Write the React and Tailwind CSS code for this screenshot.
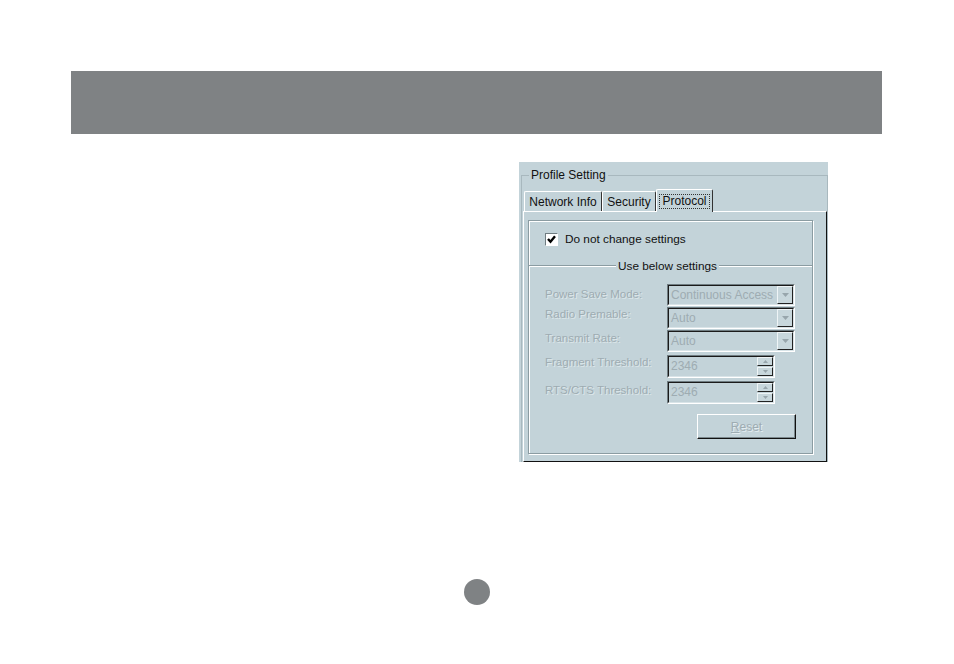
const FONT = { fontFamily: '"Liberation Sans", Arial, sans-serif' };

function Arrow() {
  return (
    <svg width="7" height="4" viewBox="0 0 7 4">
      <path d="M0 0h7L3.5 4z" fill="#98a6ac" />
    </svg>
  );
}

function Combo({ value }) {
  return (
    <div className="flex h-[22px] w-[128px] border border-t-[#6f7c81] border-l-[#6f7c81] border-r-white border-b-white">
      <div className="flex flex-1 border border-t-[#1a1a1a] border-l-[#1a1a1a] border-r-[#d9e4e8] border-b-[#d9e4e8]">
        <div className="flex-1 pl-[2px] text-[12px] leading-[18px] text-[#9eacb2]">{value}</div>
        <div className="flex w-[16px] items-center justify-center border border-t-[#eef4f6] border-l-[#eef4f6] border-r-[#222] border-b-[#222] bg-[#c8d7dc]">
          <Arrow />
        </div>
      </div>
    </div>
  );
}

function SpinBtn({ up }) {
  return (
    <div className="flex h-[9px] w-[16px] items-center justify-center border border-t-[#eef4f6] border-l-[#eef4f6] border-r-[#222] border-b-[#222] bg-[#c8d7dc]">
      <svg width="5" height="3" viewBox="0 0 5 3">
        <path d={up ? 'M0 3h5L2.5 0z' : 'M0 0h5L2.5 3z'} fill="#98a6ac" />
      </svg>
    </div>
  );
}

function Spin({ value }) {
  return (
    <div className="flex h-[23px] w-[108px] border border-t-[#6f7c81] border-l-[#6f7c81] border-r-white border-b-white">
      <div className="flex flex-1 border border-t-[#1a1a1a] border-l-[#1a1a1a] border-r-[#d9e4e8] border-b-[#d9e4e8]">
        <div className="flex-1 pl-[2px] text-[12px] leading-[18px] text-[#9eacb2]">{value}</div>
        <div className="flex flex-col justify-center gap-[1px]">
          <SpinBtn up />
          <SpinBtn />
        </div>
      </div>
    </div>
  );
}

function Row({ label, pt, children }) {
  return (
    <div className="flex items-start">
      <div
        className="w-[122px] text-[11.5px] leading-[14px] text-[#9eacb2] [text-shadow:1px_1px_0_#dde7ea]"
        style={{ paddingTop: pt }}
      >
        {label}
      </div>
      {children}
    </div>
  );
}

function Tab({ label, active, w }) {
  return (
    <div
      className={
        'flex items-center justify-center rounded-t-[2px] border-l border-t border-r border-l-white border-t-white border-r-[#333] bg-[#c3d3d9] text-[12px] text-[#111] ' +
        (active ? 'h-[23px] -mb-[1px] relative z-10' : 'h-[20px]')
      }
      style={{ width: w }}
    >
      {active ? (
        <span className="border border-dotted border-[#333] px-[2px] leading-[13px]">{label}</span>
      ) : (
        <span>{label}</span>
      )}
    </div>
  );
}

export default function App() {
  return (
    <div className="min-h-[664px] w-[954px] bg-white pt-[71px]" style={FONT}>
      <div className="ml-[71px] h-[63px] w-[811px] bg-[#7f8284]" />

      <div className="ml-[519px] mt-[28px] h-[300px] w-[309px] bg-[#c3d3d9] pl-[2px] pt-[6px]">
        <fieldset className="h-[294px] w-[306px] border-l border-t border-r border-[#a8b8be] pl-[1px]">
          <legend className="ml-[6px] px-[2px] text-[12px] leading-[14px] text-[#111]">Profile Setting</legend>

          <div className="mt-[6px] flex h-[23px] items-end pl-[1px]">
            <Tab label="Network Info" w={78} />
            <Tab label="Security" w={54} />
            <Tab label="Protocol" w={57} active />
          </div>

          <div className="h-[251px] w-[304px] border border-t-white border-l-white border-r-[#111] border-b-[#111] pl-[4px] pt-[8px]">
            <div className="h-[234px] w-[285px] border border-[#8b9ca2] shadow-[inset_1px_1px_0_#fff,1px_1px_0_#fff]">
              <div className="ml-[16px] mt-[12px] flex h-[13px] items-center">
                <div className="flex h-[13px] w-[13px] items-center justify-center border border-t-[#6f7c81] border-l-[#6f7c81] border-r-white border-b-white bg-white">
                  <svg width="9" height="9" viewBox="0 0 9 9">
                    <path d="M1 4l2.5 2.7L8 1.3" stroke="#000" strokeWidth="2.4" fill="none" />
                  </svg>
                </div>
                <span className="ml-[7px] text-[11.8px] text-[#111]">Do not change settings</span>
              </div>

              <div className="mt-[13px] flex h-[14px] items-center">
                <div className="h-[2px] flex-1 border-t border-b border-t-[#8b9ca2] border-b-white" />
                <span className="px-[2px] text-[11.8px] leading-[14px] text-[#111]">Use below settings</span>
                <div className="h-[2px] w-[93px] border-t border-b border-t-[#8b9ca2] border-b-white" />
              </div>

              <div className="ml-[16px] mt-[11px] flex flex-col gap-[1px]">
                <Row label="Power Save Mode:" pt={3}>
                  <Combo value="Continuous Access" />
                </Row>
                <Row label="Radio Premable:" pt={0}>
                  <Combo value="Auto" />
                </Row>
                <Row label="Transmit Rate:" pt={1}>
                  <Combo value="Auto" />
                </Row>
                <div className="mt-[2px]">
                  <Row label="Fragment Threshold:" pt={0}>
                    <Spin value="2346" />
                  </Row>
                </div>
                <div className="mt-[2px]">
                  <Row label="RTS/CTS Threshold:" pt={2}>
                    <Spin value="2346" />
                  </Row>
                </div>
              </div>

              <div className="ml-[168px] mt-[10px] flex h-[25px] w-[99px] items-center justify-center border border-t-white border-l-white border-r-[#111] border-b-[#111] shadow-[inset_-1px_-1px_0_#7b888d] text-[12px] text-[#9eacb2] [text-shadow:1px_1px_0_#e4edf0]">
                <span>
                  <span className="underline">R</span>eset
                </span>
              </div>
            </div>
          </div>
        </fieldset>
      </div>

      <div className="mx-auto mt-[117px] h-[26px] w-[26px] rounded-full bg-[#7f8284]" />
    </div>
  );
}
